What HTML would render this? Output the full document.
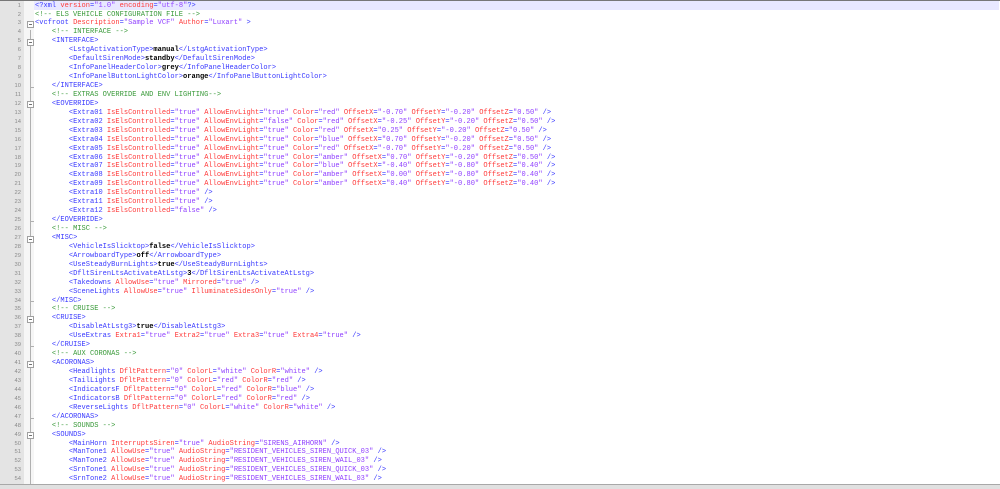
<!DOCTYPE html>
<html><head><meta charset="utf-8"><style>
html,body{margin:0;padding:0;width:1000px;height:488px;overflow:hidden;background:#fff}
#top{position:absolute;left:0;top:0;width:1000px;height:1px;background:#777}
#ln{position:absolute;left:0;top:1px;width:24px;height:483px;background:#e4e4e4}
#fm{position:absolute;left:24px;top:1px;width:10px;height:483px;background:#f6f6f6}
#cur{position:absolute;left:34px;top:1px;width:965px;height:9px;background:#e8e8ff}
#bot{position:absolute;left:0;top:484px;width:1000px;height:4px;background:#e0e0e0;border-top:1px solid #a8a8a8}
.nums{position:absolute;left:0;top:1.6px;width:21px;text-align:right;font:5.8px/8.94px "Liberation Sans",sans-serif;color:#8a8a8a}
pre{position:absolute;left:35px;top:1.6px;margin:0;font:7.05px/8.94px "Liberation Mono",monospace;color:#000;white-space:pre}
.t{color:#3a3aff}.a{color:#ff3a3a}.v{color:#9040ff}.c{color:#3a9a3a}.b{font-weight:bold}
.vl{position:absolute;left:30px;width:1px;background:#b0b0b0}
.bx{position:absolute;left:27px;width:5px;height:5px;border:1px solid #a0a0a0;background:#fff}
.bx:after{content:"";position:absolute;left:1px;top:2px;width:3px;height:1px;background:#707070}
.tk{position:absolute;left:30px;width:4px;height:1px;background:#b0b0b0}
</style></head><body>
<div id="top"></div><div id="ln"></div><div id="fm"></div><div id="cur"></div>
<div class="vl" style="top:30px;height:454px"></div>
<div class="bx" style="top:20.5px"></div>
<div class="bx" style="top:38.5px"></div>
<div class="bx" style="top:101px"></div>
<div class="bx" style="top:235.5px"></div>
<div class="bx" style="top:315.5px"></div>
<div class="bx" style="top:360.5px"></div>
<div class="bx" style="top:431.5px"></div>
<div class="tk" style="top:87px"></div><div class="tk" style="top:221px"></div><div class="tk" style="top:301px"></div><div class="tk" style="top:346px"></div><div class="tk" style="top:418px"></div>
<div class="nums">1<br>2<br>3<br>4<br>5<br>6<br>7<br>8<br>9<br>10<br>11<br>12<br>13<br>14<br>15<br>16<br>17<br>18<br>19<br>20<br>21<br>22<br>23<br>24<br>25<br>26<br>27<br>28<br>29<br>30<br>31<br>32<br>33<br>34<br>35<br>36<br>37<br>38<br>39<br>40<br>41<br>42<br>43<br>44<br>45<br>46<br>47<br>48<br>49<br>50<br>51<br>52<br>53<br>54</div>
<pre><span class="t">&lt;?xml</span> <span class="a">version</span><span class="t">=</span><span class="v">"1.0"</span> <span class="a">encoding</span><span class="t">=</span><span class="v">"utf-8"</span><span class="t">?&gt;</span>
<span class="c">&lt;!-- ELS VEHICLE CONFIGURATION FILE --&gt;</span>
<span class="t">&lt;vcfroot</span> <span class="a">Description</span><span class="t">=</span><span class="v">"Sample VCF"</span> <span class="a">Author</span><span class="t">=</span><span class="v">"Luxart"</span> <span class="t">&gt;</span>
    <span class="c">&lt;!-- INTERFACE --&gt;</span>
    <span class="t">&lt;INTERFACE&gt;</span>
        <span class="t">&lt;LstgActivationType&gt;</span><span class="b">manual</span><span class="t">&lt;/LstgActivationType&gt;</span>
        <span class="t">&lt;DefaultSirenMode&gt;</span><span class="b">standby</span><span class="t">&lt;/DefaultSirenMode&gt;</span>
        <span class="t">&lt;InfoPanelHeaderColor&gt;</span><span class="b">grey</span><span class="t">&lt;/InfoPanelHeaderColor&gt;</span>
        <span class="t">&lt;InfoPanelButtonLightColor&gt;</span><span class="b">orange</span><span class="t">&lt;/InfoPanelButtonLightColor&gt;</span>
    <span class="t">&lt;/INTERFACE&gt;</span>
    <span class="c">&lt;!-- EXTRAS OVERRIDE AND ENV LIGHTING--&gt;</span>
    <span class="t">&lt;EOVERRIDE&gt;</span>
        <span class="t">&lt;Extra01</span> <span class="a">IsElsControlled</span><span class="t">=</span><span class="v">"true"</span> <span class="a">AllowEnvLight</span><span class="t">=</span><span class="v">"true"</span> <span class="a">Color</span><span class="t">=</span><span class="v">"red"</span> <span class="a">OffsetX</span><span class="t">=</span><span class="v">"-0.70"</span> <span class="a">OffsetY</span><span class="t">=</span><span class="v">"-0.20"</span> <span class="a">OffsetZ</span><span class="t">=</span><span class="v">"0.50"</span> <span class="t">/&gt;</span>
        <span class="t">&lt;Extra02</span> <span class="a">IsElsControlled</span><span class="t">=</span><span class="v">"true"</span> <span class="a">AllowEnvLight</span><span class="t">=</span><span class="v">"false"</span> <span class="a">Color</span><span class="t">=</span><span class="v">"red"</span> <span class="a">OffsetX</span><span class="t">=</span><span class="v">"-0.25"</span> <span class="a">OffsetY</span><span class="t">=</span><span class="v">"-0.20"</span> <span class="a">OffsetZ</span><span class="t">=</span><span class="v">"0.50"</span> <span class="t">/&gt;</span>
        <span class="t">&lt;Extra03</span> <span class="a">IsElsControlled</span><span class="t">=</span><span class="v">"true"</span> <span class="a">AllowEnvLight</span><span class="t">=</span><span class="v">"true"</span> <span class="a">Color</span><span class="t">=</span><span class="v">"red"</span> <span class="a">OffsetX</span><span class="t">=</span><span class="v">"0.25"</span> <span class="a">OffsetY</span><span class="t">=</span><span class="v">"-0.20"</span> <span class="a">OffsetZ</span><span class="t">=</span><span class="v">"0.50"</span> <span class="t">/&gt;</span>
        <span class="t">&lt;Extra04</span> <span class="a">IsElsControlled</span><span class="t">=</span><span class="v">"true"</span> <span class="a">AllowEnvLight</span><span class="t">=</span><span class="v">"true"</span> <span class="a">Color</span><span class="t">=</span><span class="v">"blue"</span> <span class="a">OffsetX</span><span class="t">=</span><span class="v">"0.70"</span> <span class="a">OffsetY</span><span class="t">=</span><span class="v">"-0.20"</span> <span class="a">OffsetZ</span><span class="t">=</span><span class="v">"0.50"</span> <span class="t">/&gt;</span>
        <span class="t">&lt;Extra05</span> <span class="a">IsElsControlled</span><span class="t">=</span><span class="v">"true"</span> <span class="a">AllowEnvLight</span><span class="t">=</span><span class="v">"true"</span> <span class="a">Color</span><span class="t">=</span><span class="v">"red"</span> <span class="a">OffsetX</span><span class="t">=</span><span class="v">"-0.70"</span> <span class="a">OffsetY</span><span class="t">=</span><span class="v">"-0.20"</span> <span class="a">OffsetZ</span><span class="t">=</span><span class="v">"0.50"</span> <span class="t">/&gt;</span>
        <span class="t">&lt;Extra06</span> <span class="a">IsElsControlled</span><span class="t">=</span><span class="v">"true"</span> <span class="a">AllowEnvLight</span><span class="t">=</span><span class="v">"true"</span> <span class="a">Color</span><span class="t">=</span><span class="v">"amber"</span> <span class="a">OffsetX</span><span class="t">=</span><span class="v">"0.70"</span> <span class="a">OffsetY</span><span class="t">=</span><span class="v">"-0.20"</span> <span class="a">OffsetZ</span><span class="t">=</span><span class="v">"0.50"</span> <span class="t">/&gt;</span>
        <span class="t">&lt;Extra07</span> <span class="a">IsElsControlled</span><span class="t">=</span><span class="v">"true"</span> <span class="a">AllowEnvLight</span><span class="t">=</span><span class="v">"true"</span> <span class="a">Color</span><span class="t">=</span><span class="v">"blue"</span> <span class="a">OffsetX</span><span class="t">=</span><span class="v">"-0.40"</span> <span class="a">OffsetY</span><span class="t">=</span><span class="v">"-0.80"</span> <span class="a">OffsetZ</span><span class="t">=</span><span class="v">"0.40"</span> <span class="t">/&gt;</span>
        <span class="t">&lt;Extra08</span> <span class="a">IsElsControlled</span><span class="t">=</span><span class="v">"true"</span> <span class="a">AllowEnvLight</span><span class="t">=</span><span class="v">"true"</span> <span class="a">Color</span><span class="t">=</span><span class="v">"amber"</span> <span class="a">OffsetX</span><span class="t">=</span><span class="v">"0.00"</span> <span class="a">OffsetY</span><span class="t">=</span><span class="v">"-0.80"</span> <span class="a">OffsetZ</span><span class="t">=</span><span class="v">"0.40"</span> <span class="t">/&gt;</span>
        <span class="t">&lt;Extra09</span> <span class="a">IsElsControlled</span><span class="t">=</span><span class="v">"true"</span> <span class="a">AllowEnvLight</span><span class="t">=</span><span class="v">"true"</span> <span class="a">Color</span><span class="t">=</span><span class="v">"amber"</span> <span class="a">OffsetX</span><span class="t">=</span><span class="v">"0.40"</span> <span class="a">OffsetY</span><span class="t">=</span><span class="v">"-0.80"</span> <span class="a">OffsetZ</span><span class="t">=</span><span class="v">"0.40"</span> <span class="t">/&gt;</span>
        <span class="t">&lt;Extra10</span> <span class="a">IsElsControlled</span><span class="t">=</span><span class="v">"true"</span> <span class="t">/&gt;</span>
        <span class="t">&lt;Extra11</span> <span class="a">IsElsControlled</span><span class="t">=</span><span class="v">"true"</span> <span class="t">/&gt;</span>
        <span class="t">&lt;Extra12</span> <span class="a">IsElsControlled</span><span class="t">=</span><span class="v">"false"</span> <span class="t">/&gt;</span>
    <span class="t">&lt;/EOVERRIDE&gt;</span>
    <span class="c">&lt;!-- MISC --&gt;</span>
    <span class="t">&lt;MISC&gt;</span>
        <span class="t">&lt;VehicleIsSlicktop&gt;</span><span class="b">false</span><span class="t">&lt;/VehicleIsSlicktop&gt;</span>
        <span class="t">&lt;ArrowboardType&gt;</span><span class="b">off</span><span class="t">&lt;/ArrowboardType&gt;</span>
        <span class="t">&lt;UseSteadyBurnLights&gt;</span><span class="b">true</span><span class="t">&lt;/UseSteadyBurnLights&gt;</span>
        <span class="t">&lt;DfltSirenLtsActivateAtLstg&gt;</span><span class="b">3</span><span class="t">&lt;/DfltSirenLtsActivateAtLstg&gt;</span>
        <span class="t">&lt;Takedowns</span> <span class="a">AllowUse</span><span class="t">=</span><span class="v">"true"</span> <span class="a">Mirrored</span><span class="t">=</span><span class="v">"true"</span> <span class="t">/&gt;</span>
        <span class="t">&lt;SceneLights</span> <span class="a">AllowUse</span><span class="t">=</span><span class="v">"true"</span> <span class="a">IlluminateSidesOnly</span><span class="t">=</span><span class="v">"true"</span> <span class="t">/&gt;</span>
    <span class="t">&lt;/MISC&gt;</span>
    <span class="c">&lt;!-- CRUISE --&gt;</span>
    <span class="t">&lt;CRUISE&gt;</span>
        <span class="t">&lt;DisableAtLstg3&gt;</span><span class="b">true</span><span class="t">&lt;/DisableAtLstg3&gt;</span>
        <span class="t">&lt;UseExtras</span> <span class="a">Extra1</span><span class="t">=</span><span class="v">"true"</span> <span class="a">Extra2</span><span class="t">=</span><span class="v">"true"</span> <span class="a">Extra3</span><span class="t">=</span><span class="v">"true"</span> <span class="a">Extra4</span><span class="t">=</span><span class="v">"true"</span> <span class="t">/&gt;</span>
    <span class="t">&lt;/CRUISE&gt;</span>
    <span class="c">&lt;!-- AUX CORONAS --&gt;</span>
    <span class="t">&lt;ACORONAS&gt;</span>
        <span class="t">&lt;Headlights</span> <span class="a">DfltPattern</span><span class="t">=</span><span class="v">"0"</span> <span class="a">ColorL</span><span class="t">=</span><span class="v">"white"</span> <span class="a">ColorR</span><span class="t">=</span><span class="v">"white"</span> <span class="t">/&gt;</span>
        <span class="t">&lt;TailLights</span> <span class="a">DfltPattern</span><span class="t">=</span><span class="v">"0"</span> <span class="a">ColorL</span><span class="t">=</span><span class="v">"red"</span> <span class="a">ColorR</span><span class="t">=</span><span class="v">"red"</span> <span class="t">/&gt;</span>
        <span class="t">&lt;IndicatorsF</span> <span class="a">DfltPattern</span><span class="t">=</span><span class="v">"0"</span> <span class="a">ColorL</span><span class="t">=</span><span class="v">"red"</span> <span class="a">ColorR</span><span class="t">=</span><span class="v">"blue"</span> <span class="t">/&gt;</span>
        <span class="t">&lt;IndicatorsB</span> <span class="a">DfltPattern</span><span class="t">=</span><span class="v">"0"</span> <span class="a">ColorL</span><span class="t">=</span><span class="v">"red"</span> <span class="a">ColorR</span><span class="t">=</span><span class="v">"red"</span> <span class="t">/&gt;</span>
        <span class="t">&lt;ReverseLights</span> <span class="a">DfltPattern</span><span class="t">=</span><span class="v">"0"</span> <span class="a">ColorL</span><span class="t">=</span><span class="v">"white"</span> <span class="a">ColorR</span><span class="t">=</span><span class="v">"white"</span> <span class="t">/&gt;</span>
    <span class="t">&lt;/ACORONAS&gt;</span>
    <span class="c">&lt;!-- SOUNDS --&gt;</span>
    <span class="t">&lt;SOUNDS&gt;</span>
        <span class="t">&lt;MainHorn</span> <span class="a">InterruptsSiren</span><span class="t">=</span><span class="v">"true"</span> <span class="a">AudioString</span><span class="t">=</span><span class="v">"SIRENS_AIRHORN"</span> <span class="t">/&gt;</span>
        <span class="t">&lt;ManTone1</span> <span class="a">AllowUse</span><span class="t">=</span><span class="v">"true"</span> <span class="a">AudioString</span><span class="t">=</span><span class="v">"RESIDENT_VEHICLES_SIREN_QUICK_03"</span> <span class="t">/&gt;</span>
        <span class="t">&lt;ManTone2</span> <span class="a">AllowUse</span><span class="t">=</span><span class="v">"true"</span> <span class="a">AudioString</span><span class="t">=</span><span class="v">"RESIDENT_VEHICLES_SIREN_WAIL_03"</span> <span class="t">/&gt;</span>
        <span class="t">&lt;SrnTone1</span> <span class="a">AllowUse</span><span class="t">=</span><span class="v">"true"</span> <span class="a">AudioString</span><span class="t">=</span><span class="v">"RESIDENT_VEHICLES_SIREN_QUICK_03"</span> <span class="t">/&gt;</span>
        <span class="t">&lt;SrnTone2</span> <span class="a">AllowUse</span><span class="t">=</span><span class="v">"true"</span> <span class="a">AudioString</span><span class="t">=</span><span class="v">"RESIDENT_VEHICLES_SIREN_WAIL_03"</span> <span class="t">/&gt;</span></pre>
<div id="bot"></div>
</body></html>
